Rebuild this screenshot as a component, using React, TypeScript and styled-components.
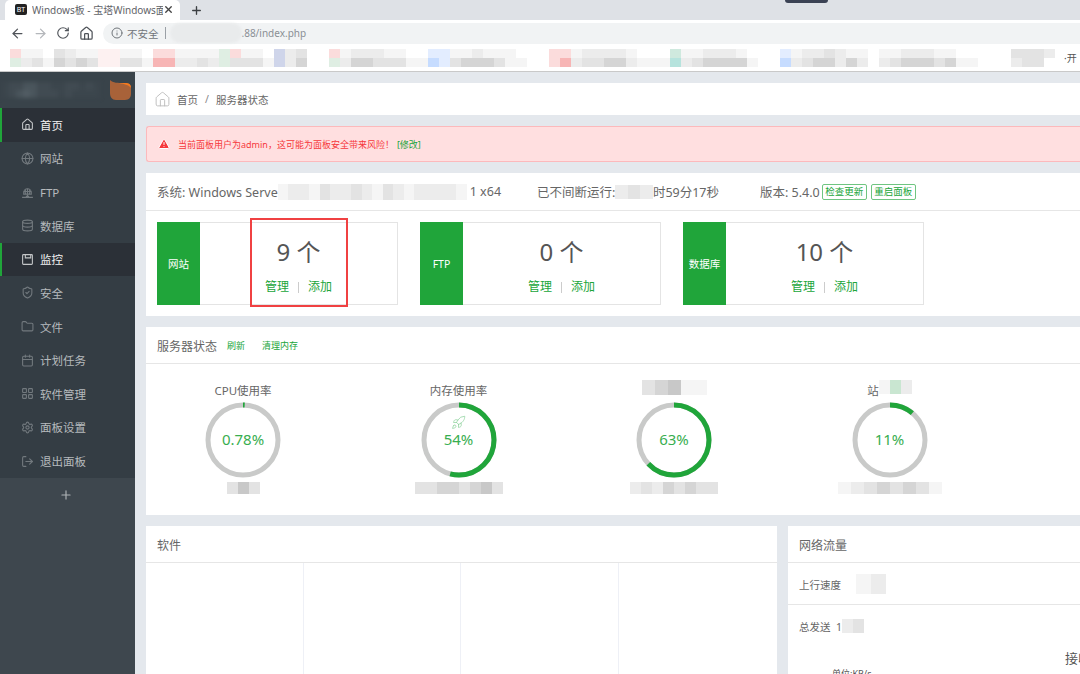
import React from 'react';
import styled, { createGlobalStyle } from 'styled-components';
import {
  ArrowLeft, ArrowRight, RotateCw, Home, Info, Plus, X, Globe, Database, ShieldCheck,
  Folder, Calendar, LayoutGrid, Settings, LogOut, Rocket, TriangleAlert,
} from 'lucide-react';

const GREEN = '#20a53a';
const FONT = '"Noto Sans", "Noto Sans CJK SC", sans-serif';

const GlobalStyle = createGlobalStyle`
  html, body { margin: 0; padding: 0; background: #e4e8ed; }
  * { box-sizing: border-box; }
`;

const PALETTE: Record<string, string> = {
  '.': 'transparent', a: '#f5f5f5', b: '#ececec', c: '#e3e3e3', d: '#d5d5d5', e: '#c8c8c8',
  p: '#fdf1f1', r: '#fbdcdc', R: '#f7b5b5', g: '#dfeee3', t: '#cfe9de', T: '#b6e3dd',
  u: '#e3edff', U: '#c6dcff', v: '#cfd5ea', h: '#c9e6d1',
  x: '#414b52', y: '#4a555c', z: '#3c464d', w: '#525d64',
};

const Cell = styled.i<{ $c: string }>`
  background: ${p => p.$c};
`;

const MosaicGrid = styled.div<{ $rows: number; $w: number; $h: number; $soft?: boolean }>`
  display: inline-grid;
  flex: none;
  grid-auto-flow: column;
  grid-template-rows: repeat(${p => p.$rows}, ${p => p.$h}px);
  grid-auto-columns: ${p => p.$w}px;
  filter: blur(${p => (p.$soft ? 2 : 0.5)}px);
`;

function Mosaic({ top, bottom, w = 11, h = 11, soft }: { top: string; bottom?: string; w?: number; h?: number; soft?: boolean }) {
  const cells: string[] = [];
  for (let i = 0; i < top.length; i++) {
    cells.push(top[i]);
    if (bottom) cells.push(bottom[i]);
  }
  return (
    <MosaicGrid $rows={bottom ? 2 : 1} $w={w} $h={h} $soft={soft}>
      {cells.map((c, i) => <Cell key={i} $c={PALETTE[c]} />)}
    </MosaicGrid>
  );
}

const Page = styled.div`
  width: 1080px;
  height: 674px;
  overflow: hidden;
  display: flex;
  flex-direction: column;
  font-family: ${FONT};
  background: #e4e8ed;
`;

/* browser chrome */
const TabStrip = styled.div`
  height: 20px;
  background: #dee1e6;
  display: flex;
  align-items: flex-end;
  padding-left: 5px;
  position: relative;
`;
const Tab = styled.div`
  width: 175px;
  height: 20px;
  background: #fff;
  border-top-left-radius: 5px;
  border-top-right-radius: 5px;
  display: flex;
  align-items: center;
  padding: 0 6px 2px 10px;
  font-size: 10px;
  color: #5f6368;
`;
const Favicon = styled.span`
  width: 12px;
  height: 11px;
  border-radius: 2px;
  background: #222;
  color: #fff;
  font-size: 7px;
  line-height: 11px;
  text-align: center;
  flex: none;
`;
const TabTitle = styled.span`
  margin-left: 5px;
  width: 131px;
  overflow: hidden;
  white-space: nowrap;
  flex: none;
`;
const NewTab = styled.div`
  margin-left: 10px;
  align-self: center;
  display: flex;
  color: #3c4043;
`;
const CameraNotch = styled.div`
  position: absolute;
  left: 785px;
  top: 0;
  width: 43px;
  height: 3px;
  background: #3b4254;
  border-radius: 0 0 3px 3px;
`;
const Toolbar = styled.div`
  height: 24px;
  background: #fff;
  display: flex;
  align-items: center;
  padding: 2px 0 0 10px;
  color: #5f6368;
`;
const NavIcon = styled.span<{ $dim?: boolean }>`
  display: flex;
  width: 23px;
  flex: none;
  color: ${p => (p.$dim ? '#b4b7bb' : '#50545a')};
`;
const Omnibox = styled.div`
  margin-left: 1px;
  flex: 1;
  height: 21px;
  background: #f1f3f4;
  border-radius: 11px 0 0 11px;
  display: flex;
  align-items: center;
  padding-left: 8px;
  font-size: 10.5px;
  color: #70757a;
`;
const UrlDivider = styled.span`
  width: 1px;
  height: 12px;
  background: #9aa0a6;
  margin: 0 4px 0 6px;
`;
const UrlBlob = styled.span`
  width: 72px;
  height: 20px;
  border-radius: 10px;
  background: #e9ebec;
  filter: blur(1px);
`;
const UrlPath = styled.span`
  font-size: 10px;
  color: #8a8f94;
`;
const SecureLabel = styled.span`
  margin-left: 4px;
`;
const BookmarkBar = styled.div`
  height: 28px;
  background: #fff;
  border-bottom: 1px solid #c9c9c9;
  display: flex;
  align-items: center;
  padding-left: 10px;
  overflow: hidden;
  font-size: 10px;
  color: #555;
  white-space: nowrap;
`;
const BookmarkEnd = styled.span`
  margin-left: 9px;
`;

/* panel */
const Body = styled.div`
  flex: 1;
  display: flex;
  min-height: 0;
`;
const Sidebar = styled.aside`
  width: 135px;
  flex: none;
  background: #343d44;
  display: flex;
  flex-direction: column;
`;
const SideHeader = styled.div`
  height: 36px;
  background: #39434a;
  display: flex;
  align-items: center;
  padding: 0 3px 0 2px;
  justify-content: space-between;
`;
const NavItem = styled.div<{ $active?: boolean }>`
  height: 33.64px;
  display: flex;
  align-items: center;
  padding-left: ${p => (p.$active ? 19 : 21)}px;
  border-left: ${p => (p.$active ? `2px solid ${GREEN}` : 'none')};
  background: ${p => (p.$active ? '#2b3037' : 'transparent')};
  color: ${p => (p.$active ? '#f2f2f2' : '#b6babd')};
  font-size: 11.5px;
  svg { color: ${p => (p.$active ? '#c4c6c8' : '#72797e')}; flex: none; }
`;
const NavLabel = styled.span`
  margin-left: 6px;
`;
const SideAdd = styled.div`
  flex: 1;
  background: #3e474e;
  display: flex;
  justify-content: center;
  padding: 10px 3px 0 0;
  color: #aeb3b6;
`;

const Main = styled.main`
  flex: 1;
  min-width: 0;
  padding: 11px 0 0 11px;
  display: flex;
  flex-direction: column;
  gap: 11px;
  overflow: hidden;
`;
const Crumbs = styled.div`
  height: 32px;
  flex: none;
  background: #fff;
  display: flex;
  align-items: center;
  padding-left: 8px;
  font-size: 10.5px;
  color: #666;
  svg { color: #bbb; }
`;
const CrumbHome = styled.span`
  margin-left: 6px;
`;
const CrumbSep = styled.span`
  margin: 0 7px;
  color: #888;
`;
const Alert = styled.div`
  height: 36px;
  flex: none;
  background: #ffdfe0;
  border: 1px solid #fcb9bc;
  border-right: none;
  border-radius: 3px 0 0 3px;
  display: flex;
  align-items: center;
  padding-left: 11px;
  font-size: 9px;
  color: #f6383b;
  svg { color: #f6383b; fill: #f6383b; stroke: #fff; }
`;
const AlertText = styled.span`
  margin-left: 8px;
`;
const AlertLink = styled.span`
  margin-left: 3px;
  color: ${GREEN};
`;
const Card = styled.section`
  background: #fff;
  flex: none;
`;
const InfoRow = styled.div`
  height: 38px;
  border-bottom: 1px solid #e6e6e6;
  display: flex;
  align-items: center;
  padding-left: 11px;
  font-size: 12.5px;
  color: #666;
  white-space: nowrap;
`;
const InfoGap = styled.span<{ $w: number }>`
  margin-left: ${p => p.$w}px;
`;
const OutlineButton = styled.span<{ $gap: number }>`
  height: 16px;
  width: 45px;
  margin-left: ${p => p.$gap}px;
  border: 1px solid #6fc581;
  border-radius: 2px;
  color: ${GREEN};
  font-size: 9.5px;
  line-height: 14px;
  text-align: center;
`;
const StatRow = styled.div`
  display: flex;
  gap: 22px;
  padding: 11px;
`;
const StatCard = styled.div`
  position: relative;
  width: 241px;
  height: 83px;
  display: flex;
  border: 1px solid #e4e4e4;
`;
const StatLabel = styled.div`
  width: 43px;
  margin: -1px 0 -1px -1px;
  flex: none;
  background: ${GREEN};
  color: #fff;
  font-size: 10.5px;
  display: flex;
  align-items: center;
  justify-content: center;
`;
const StatBody = styled.div`
  flex: 1;
  display: flex;
  flex-direction: column;
  align-items: center;
  padding-top: 11px;
`;
const StatNumber = styled.div`
  font-size: 24px;
  line-height: 36px;
  color: #555;
`;
const StatLinks = styled.div`
  margin-top: 9px;
  font-size: 12px;
  line-height: 16px;
  color: ${GREEN};
  display: flex;
  align-items: center;
`;
const LinkSep = styled.span`
  width: 1px;
  height: 11px;
  background: #ccc;
  margin: 0 9px;
`;
const Highlight = styled.div`
  position: absolute;
  left: 92px;
  top: -5px;
  width: 98px;
  height: 89px;
  border: 2px solid #f04142;
`;
const CardHead = styled.div`
  height: 37px;
  border-bottom: 1px solid #e6e6e6;
  display: flex;
  align-items: center;
  padding: 1px 0 0 11px;
  font-size: 12px;
  color: #666;
`;
const HeadLink = styled.span<{ $gap: number }>`
  margin-left: ${p => p.$gap}px;
  font-size: 9px;
  color: ${GREEN};
`;
const GaugeRow = styled.div`
  height: 151px;
  display: grid;
  grid-template-columns: repeat(4, 150px);
  column-gap: 65.5px;
  padding: 16px 0 0 22px;
`;
const GaugeCell = styled.div`
  display: flex;
  flex-direction: column;
  align-items: center;
`;
const GaugeTitle = styled.div`
  height: 22px;
  font-size: 11.5px;
  line-height: 22px;
  color: #666;
  display: flex;
  justify-content: center;
`;
const GaugeDial = styled.div`
  position: relative;
  width: 76px;
  height: 76px;
`;
const GaugeValue = styled.div`
  position: absolute;
  inset: 0 0 2px;
  display: flex;
  align-items: center;
  justify-content: center;
  font-size: 15px;
  color: #38ae50;
`;
const GaugeRocket = styled.span`
  position: absolute;
  top: 13px;
  left: 30px;
  display: flex;
  color: #8ed19c;
`;
const GaugeCaption = styled.div`
  margin-top: 4px;
  display: flex;
`;
const BottomRow = styled.div`
  flex: 1;
  display: flex;
  gap: 11px;
  min-height: 0;
`;
const SoftCard = styled(Card)`
  width: 631px;
  display: flex;
  flex-direction: column;
`;
const SoftGrid = styled.div`
  flex: 1;
  display: grid;
  grid-template-columns: repeat(4, 157.5px);
`;
const SoftCell = styled.div`
  border-right: 1px solid #eef0f6;
  &:last-child { border-right: none; }
`;
const NetCard = styled(Card)`
  flex: 1;
  overflow: hidden;
`;
const NetRow = styled.div<{ $h: number; $line?: boolean }>`
  height: ${p => p.$h}px;
  padding: 1px 0 0 11px;
  display: flex;
  align-items: center;
  font-size: 10.5px;
  color: #666;
  white-space: nowrap;
  border-bottom: ${p => (p.$line ? '1px solid #e6e6e6' : 'none')};
`;
const ChartTitle = styled.div`
  margin-top: 2px;
  padding-left: 277px;
  font-size: 13px;
  line-height: 20px;
  color: #555;
  white-space: nowrap;
`;
const ChartUnit = styled.div`
  padding-left: 44px;
  font-size: 9px;
  line-height: 12px;
  color: #555;
  white-space: nowrap;
`;

function FtpIcon() {
  return (
    <svg width="13" height="13" viewBox="0 0 24 24" fill="none" stroke="currentColor" strokeWidth="2">
      <path d="M5 12a7 7 0 0 1 14 0v3H5z" />
      <path d="M12 5v10M5 10h14M8.500 6.500c-1 2-1 6 0 8.500M15.500 6.500c1 2 1 6 0 8.500" />
      <path d="M12 15v4M2 21h20M9 19h6" />
    </svg>
  );
}

function MonitorIcon() {
  return (
    <svg width="13" height="13" viewBox="0 0 24 24" fill="none" stroke="currentColor" strokeWidth="2">
      <rect x="3" y="3" width="18" height="18" rx="1.500" />
      <path d="M8 3v6h10V3" />
    </svg>
  );
}

function ServerLogo() {
  return (
    <svg width="23" height="20" viewBox="0 0 23 20">
      <path d="M1 0c3 3 8 3 14 3 4 0 7 1 7 5v6c0 3-2 6-6 6H7C3 20 1 17 1 13z" fill="#a86239" />
      <path d="M10 3h6c4 0 6 1 6 5-2-3-7-4-12-5z" fill="#f47a20" />
    </svg>
  );
}

function Dial({ percent }: { percent: number }) {
  const r = 35;
  const len = 2 * Math.PI * r;
  return (
    <svg width="76" height="76" viewBox="0 0 76 76">
      <circle cx="38" cy="38" r={r} fill="none" stroke="#c9cac9" strokeWidth="5" />
      <circle
        cx="38" cy="38" r={r} fill="none" stroke={GREEN} strokeWidth="5"
        strokeDasharray={`${(len * percent) / 100} ${len}`}
        transform="rotate(-90 38 38)"
      />
    </svg>
  );
}

const NAV = [
  { label: '首页', icon: <Home size={13} />, active: true },
  { label: '网站', icon: <Globe size={13} /> },
  { label: 'FTP', icon: <FtpIcon /> },
  { label: '数据库', icon: <Database size={13} /> },
  { label: '监控', icon: <MonitorIcon />, active: true },
  { label: '安全', icon: <ShieldCheck size={13} /> },
  { label: '文件', icon: <Folder size={13} /> },
  { label: '计划任务', icon: <Calendar size={13} /> },
  { label: '软件管理', icon: <LayoutGrid size={13} /> },
  { label: '面板设置', icon: <Settings size={13} /> },
  { label: '退出面板', icon: <LogOut size={13} /> },
];

const STATS = [
  { label: '网站', count: 9, marked: true },
  { label: 'FTP', count: 0 },
  { label: '数据库', count: 10 },
];

// one pair per 11px column of the smudged bookmark row: top cell, bottom cell
const BOOK_COLS = 'rg ab ac .a cd bc ad ac pp pp ac ac .a rR rR ab ab ac ab gg rc ac ac .a vv bb cd .. .. rg ab bd bd bc ac ac .a .a uU uu ac ad bd ad ac aa .a .. .. rr rR ab bc bc bd bd ab .a .a .a tT ab ac bd bd bd ad .a .. .. uU ab bc bd cd bb ad ab .. ab ac bd bd bd ac ad .a .a .. .. .. cb cc cc b.'.split(' ');
const BOOK_TOP = BOOK_COLS.map(c => c[0]).join('');
const BOOK_BOT = BOOK_COLS.map(c => c[1]).join('');

export default function App() {
  return (
    <Page>
      <GlobalStyle />
      <TabStrip>
        <Tab>
          <Favicon>BT</Favicon>
          <TabTitle>Windows板 - 宝塔Windows面板</TabTitle>
          <X size={11} strokeWidth={3} color="#444" />
        </Tab>
        <NewTab><Plus size={13} strokeWidth={2.5} /></NewTab>
        <CameraNotch />
      </TabStrip>
      <Toolbar>
        <NavIcon><ArrowLeft size={15} /></NavIcon>
        <NavIcon $dim><ArrowRight size={15} /></NavIcon>
        <NavIcon><RotateCw size={14} /></NavIcon>
        <NavIcon><Home size={15} /></NavIcon>
        <Omnibox>
          <Info size={12} />
          <SecureLabel>不安全</SecureLabel>
          <UrlDivider />
          <UrlBlob />
          <UrlPath>.88/index.php</UrlPath>
        </Omnibox>
      </Toolbar>
      <BookmarkBar>
        <Mosaic top={BOOK_TOP} bottom={BOOK_BOT} h={9} />
        <BookmarkEnd>·开</BookmarkEnd>
      </BookmarkBar>
      <Body>
        <Sidebar>
          <SideHeader>
            <Mosaic top="zxxyyxxzzxxzxz" bottom="zxywyxxxzxzzzz" w={7} h={8} soft />
            <ServerLogo />
          </SideHeader>
          {NAV.map(item => (
            <NavItem key={item.label} $active={item.active}>
              {item.icon}
              <NavLabel>{item.label}</NavLabel>
            </NavItem>
          ))}
          <SideAdd><Plus size={14} /></SideAdd>
        </Sidebar>
        <Main>
          <Crumbs>
            <Home size={17} strokeWidth={1.3} />
            <CrumbHome>首页</CrumbHome>
            <CrumbSep>/</CrumbSep>
            <span>服务器状态</span>
          </Crumbs>
          <Alert>
            <TriangleAlert size={12} />
            <AlertText>当前面板用户为admin，这可能为面板安全带来风险！</AlertText>
            <AlertLink>[修改]</AlertLink>
          </Alert>
          <Card>
            <InfoRow>
              <span>系统: Windows Serve</span>
              <Mosaic top="abbacbbcbacbabbbba" w={10.5} h={16} />
              <InfoGap $w={3}>1 x64</InfoGap>
              <InfoGap $w={36}>已不间断运行: </InfoGap>
              <Mosaic top="bcb" w={12.5} h={14} />
              <span>时59分17秒</span>
              <InfoGap $w={41}>版本: 5.4.0</InfoGap>
              <OutlineButton $gap={2}>检查更新</OutlineButton>
              <OutlineButton $gap={4}>重启面板</OutlineButton>
            </InfoRow>
            <StatRow>
              {STATS.map(stat => (
                <StatCard key={stat.label}>
                  <StatLabel>{stat.label}</StatLabel>
                  <StatBody>
                    <StatNumber>{stat.count} 个</StatNumber>
                    <StatLinks>管理<LinkSep />添加</StatLinks>
                  </StatBody>
                  {stat.marked && <Highlight />}
                </StatCard>
              ))}
            </StatRow>
          </Card>
          <Card>
            <CardHead>
              服务器状态
              <HeadLink $gap={10}>刷新</HeadLink>
              <HeadLink $gap={17}>清理内存</HeadLink>
            </CardHead>
            <GaugeRow>
              <GaugeCell>
                <GaugeTitle>CPU使用率</GaugeTitle>
                <GaugeDial>
                  <Dial percent={0.78} />
                  <GaugeValue>0.78%</GaugeValue>
                </GaugeDial>
                <GaugeCaption><Mosaic top="cec" h={12} /></GaugeCaption>
              </GaugeCell>
              <GaugeCell>
                <GaugeTitle>内存使用率</GaugeTitle>
                <GaugeDial>
                  <Dial percent={54} />
                  <GaugeRocket><Rocket size={15} strokeWidth={1.2} /></GaugeRocket>
                  <GaugeValue>54%</GaugeValue>
                </GaugeDial>
                <GaugeCaption><Mosaic top="ccddcdec" h={12} /></GaugeCaption>
              </GaugeCell>
              <GaugeCell>
                <GaugeTitle><Mosaic top="cdeaa" w={13} h={15} /></GaugeTitle>
                <GaugeDial>
                  <Dial percent={63} />
                  <GaugeValue>63%</GaugeValue>
                </GaugeDial>
                <GaugeCaption><Mosaic top="bcbdcdcc" h={12} /></GaugeCaption>
              </GaugeCell>
              <GaugeCell>
                <GaugeTitle>站<Mosaic top="ahb" h={14} /></GaugeTitle>
                <GaugeDial>
                  <Dial percent={11} />
                  <GaugeValue>11%</GaugeValue>
                </GaugeDial>
                <GaugeCaption><Mosaic top="abcdcdca" w={13} h={12} /></GaugeCaption>
              </GaugeCell>
            </GaugeRow>
          </Card>
          <BottomRow>
            <SoftCard>
              <CardHead>软件</CardHead>
              <SoftGrid>
                <SoftCell /><SoftCell /><SoftCell /><SoftCell />
              </SoftGrid>
            </SoftCard>
            <NetCard>
              <CardHead>网络流量</CardHead>
              <NetRow $h={42} $line>上行速度<Mosaic top=".ab" w={15} h={20} /></NetRow>
              <NetRow $h={41}>总发送 &nbsp;1<Mosaic top="bc" w={11} h={14} /></NetRow>
              <ChartTitle>接收</ChartTitle>
              <ChartUnit>单位:KB/s</ChartUnit>
            </NetCard>
          </BottomRow>
        </Main>
      </Body>
    </Page>
  );
}
